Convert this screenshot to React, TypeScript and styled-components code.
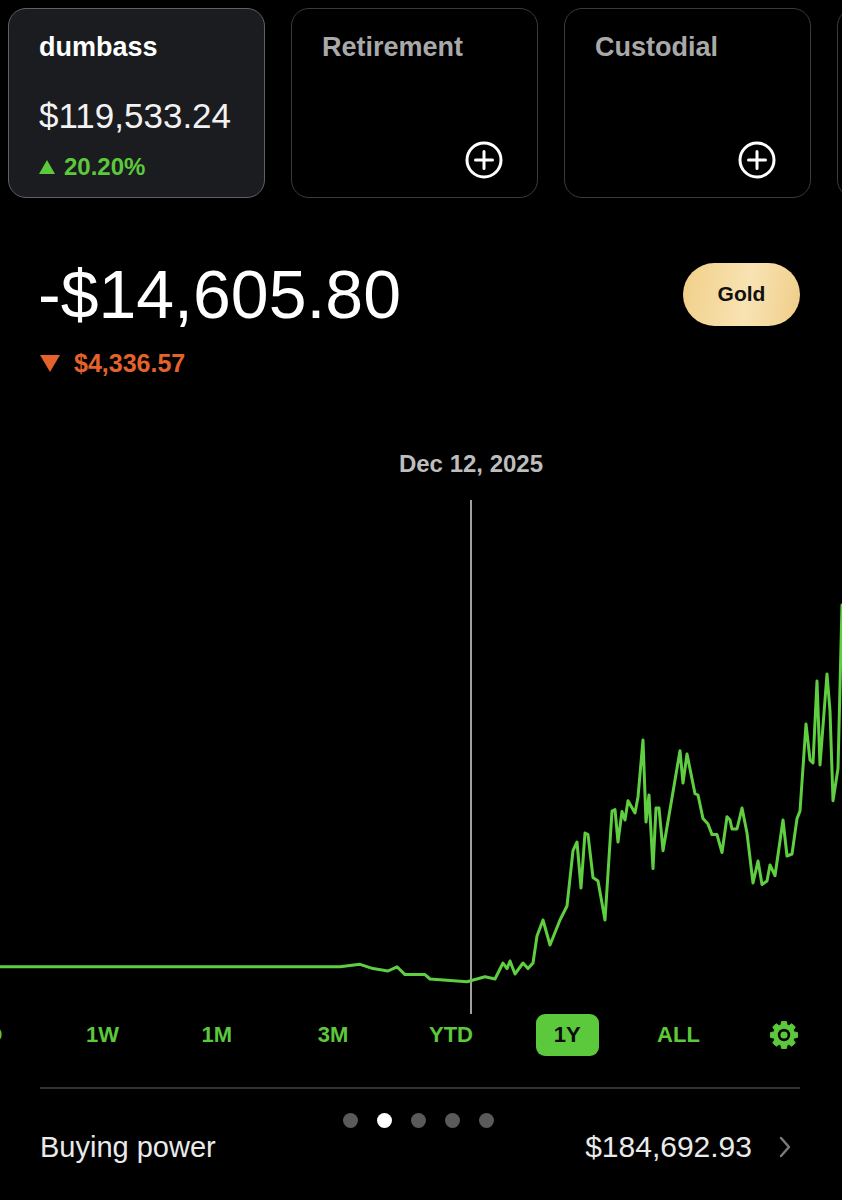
import React from "react";
import styled, { createGlobalStyle } from "styled-components";

const GREEN = "#5cc83c";
const ORANGE = "#e4622b";

const GlobalStyle = createGlobalStyle`
  html, body {
    margin: 0;
    padding: 0;
    background: #000;
  }
  body {
    font-family: "Liberation Sans", Arial, sans-serif;
    color: #fff;
    overflow-x: hidden;
  }
`;

const Page = styled.div`
  width: 842px;
  min-height: 1200px;
  background: #000;
  overflow: hidden;
`;

const CardRow = styled.div`
  display: flex;
  gap: 26px;
  padding: 8px 0 0 8px;
`;

const Card = styled.div<{ $active?: boolean; $w: number }>`
  flex: 0 0 ${(p) => p.$w}px;
  height: 190px;
  box-sizing: border-box;
  border-radius: 18px;
  border: 1.5px solid ${(p) => (p.$active ? "#606164" : "#3b3b3d")};
  background: ${(p) => (p.$active ? "#1b1c1f" : "#000")};
  padding: 22px 30px 18px 30px;
  display: flex;
  flex-direction: column;
`;

const CardTitle = styled.div<{ $active?: boolean }>`
  font-size: 27px;
  line-height: 32px;
  font-weight: 700;
  color: ${(p) => (p.$active ? "#fff" : "#a9a9a9")};
`;

const CardAmount = styled.div`
  margin-top: 33px;
  font-size: 35px;
  line-height: 40px;
  color: #f2f2f2;
`;

const CardChange = styled.div`
  margin-top: 16px;
  display: flex;
  align-items: center;
  gap: 9px;
  font-size: 24px;
  line-height: 30px;
  font-weight: 700;
  color: ${GREEN};
`;

const AddButton = styled.div`
  margin-top: auto;
  align-self: flex-end;
  margin-right: 4px;
  width: 38px;
  height: 38px;
`;

const Header = styled.div`
  margin-top: 62px;
  padding: 0 42px 0 38px;
  display: flex;
  align-items: center;
  justify-content: space-between;
`;

const Balance = styled.div`
  font-size: 68px;
  line-height: 68px;
  color: #fff;
`;

const GoldPill = styled.div`
  width: 117px;
  height: 63px;
  border-radius: 32px;
  display: flex;
  align-items: center;
  justify-content: center;
  background: linear-gradient(100deg, #f1cf88 0%, #f8e3b3 55%, #efcd88 100%);
  color: #111;
  font-size: 21px;
  font-weight: 700;
`;

const DayChange = styled.div`
  margin-top: 20px;
  padding-left: 40px;
  display: flex;
  align-items: center;
  gap: 14px;
  font-size: 25px;
  line-height: 30px;
  font-weight: 700;
  color: ${ORANGE};
`;

const DateLabel = styled.div`
  margin-top: 72px;
  text-align: center;
  padding-left: 100px;
  font-size: 24px;
  line-height: 28px;
  font-weight: 700;
  color: #bdbdbd;
`;

const Chart = styled.svg`
  display: block;
  margin-top: 14px;
  width: 842px;
  height: 522px;
`;

const RangeRow = styled.div`
  display: grid;
  grid-template-columns: 114.5px 114px 114.5px 118px 118px 114.5px 108px 103px;
  margin-left: -69px;
  height: 42px;
  align-items: center;
  justify-items: center;
`;

const RangeItem = styled.div<{ $active?: boolean }>`
  height: 42px;
  padding: 0 18px;
  border-radius: 9px;
  display: flex;
  align-items: center;
  font-size: 22px;
  font-weight: 700;
  background: ${(p) => (p.$active ? GREEN : "transparent")};
  color: ${(p) => (p.$active ? "#0b0b0b" : GREEN)};
`;

const Divider = styled.div`
  margin: 31px 42px 0 40px;
  height: 2px;
  background: #333336;
`;

const Dots = styled.div`
  margin-top: 24px;
  display: flex;
  justify-content: center;
  gap: 19px;
  padding-right: 6px;
`;

const Dot = styled.div<{ $on?: boolean }>`
  width: 15px;
  height: 15px;
  border-radius: 50%;
  background: ${(p) => (p.$on ? "#fff" : "#5a5a5c")};
`;

const PowerRow = styled.div`
  display: flex;
  align-items: center;
  justify-content: space-between;
  padding: 0 50px 0 40px;
  height: 38px;
  font-size: 29px;
  color: #eaeaea;
`;

const PowerValue = styled.div`
  display: flex;
  align-items: center;
  gap: 26px;
  font-size: 30px;
`;

const RAW: [number, number][] = [
  [0, 966.7], [340, 966.8], [360, 964.3], [373, 968.6], [388, 971], [397, 966.8],
  [405, 974.6], [425, 974.6], [430, 979], [467, 981.8], [485, 976.8], [495, 979],
  [503, 963], [507, 968.6], [510, 961], [515, 974], [523, 963], [528, 968.6],
  [533, 963], [537, 936], [543, 920], [550, 945], [560, 920], [567, 906],
  [573, 850.7], [577, 842], [581, 888], [585, 833], [588, 834.6], [593, 877.5],
  [598, 881], [605, 920], [612, 811], [615, 809.6], [618, 842], [622, 811.4],
  [625, 820], [628, 800.7], [635, 813], [638, 797], [643, 740], [646, 822],
  [649, 795], [653, 868.6], [656, 808], [659, 808], [663, 850.7], [680, 750.7],
  [683, 783], [687, 754], [695, 793.6], [698, 795], [703, 818.6], [708, 824],
  [712, 834.6], [717, 834.6], [722, 852.5], [727, 816.8], [730, 820], [732, 829],
  [737, 829], [742, 808], [747, 833], [753, 883], [758, 861], [762, 884.6],
  [767, 881], [770, 865], [775, 875.7], [783, 820], [787, 856], [792, 854],
  [797, 818.6], [800, 811], [806, 724], [810, 760], [813, 763], [817, 681],
  [820, 765], [827, 674], [830, 711], [833, 800.7], [838, 768.6], [842, 605],
];

const CHART_TOP = 492;
const linePoints = RAW.map(([x, y]) => `${x},${(y - CHART_TOP).toFixed(1)}`).join(" ");

function PlusCircle() {
  return (
    <svg width="38" height="38" viewBox="0 0 38 38">
      <circle cx="19" cy="19" r="17" fill="none" stroke="#fff" strokeWidth="3" />
      <path d="M19 10.5v17M10.5 19h17" stroke="#fff" strokeWidth="3" strokeLinecap="round" />
    </svg>
  );
}

function Cog() {
  const pts: string[] = [];
  const d = (deg: number) => (deg * Math.PI) / 180;
  const add = (ang: number, r: number) =>
    pts.push(`${(14 + r * Math.cos(ang)).toFixed(2)},${(14 + r * Math.sin(ang)).toFixed(2)}`);
  for (let i = 0; i < 8; i++) {
    const a = d(i * 45);
    add(a - d(17), 10.5);
    add(a - d(10), 13.8);
    add(a + d(10), 13.8);
    add(a + d(17), 10.5);
  }
  return (
    <svg width="28" height="28" viewBox="0 0 28 28">
      <polygon points={pts.join(" ")} fill={GREEN} strokeLinejoin="round" stroke={GREEN} strokeWidth="1" />
      <circle cx="14" cy="14" r="6.2" fill="#000" />
      <circle cx="14" cy="14" r="3.6" fill={GREEN} />
    </svg>
  );
}

function Chevron() {
  return (
    <svg width="14" height="24" viewBox="0 0 14 24">
      <path d="M3 3l8 9-8 9" fill="none" stroke="#7a7a7a" strokeWidth="2.5" strokeLinecap="round" strokeLinejoin="round" />
    </svg>
  );
}

const ranges = ["1D", "1W", "1M", "3M", "YTD", "1Y", "ALL"];

export default function App() {
  return (
    <Page>
      <GlobalStyle />
      <CardRow>
        <Card $active $w={257}>
          <CardTitle $active>dumbass</CardTitle>
          <CardAmount>$119,533.24</CardAmount>
          <CardChange>
            <svg width="16" height="14" viewBox="0 0 16 14">
              <path d="M8 0L16 14H0z" fill={GREEN} />
            </svg>
            20.20%
          </CardChange>
        </Card>
        <Card $w={247}>
          <CardTitle>Retirement</CardTitle>
          <AddButton>
            <PlusCircle />
          </AddButton>
        </Card>
        <Card $w={247}>
          <CardTitle>Custodial</CardTitle>
          <AddButton>
            <PlusCircle />
          </AddButton>
        </Card>
        <Card $w={247} />
      </CardRow>

      <Header>
        <Balance>-$14,605.80</Balance>
        <GoldPill>Gold</GoldPill>
      </Header>

      <DayChange>
        <svg width="20" height="17" viewBox="0 0 20 17">
          <path d="M0 0H20L10 17z" fill={ORANGE} />
        </svg>
        $4,336.57
      </DayChange>

      <DateLabel>Dec 12, 2025</DateLabel>

      <Chart viewBox="0 0 842 522">
        <line x1="471" y1="8" x2="471" y2="522" stroke="#a0a0a0" strokeWidth="2" />
        <polyline
          points={linePoints}
          fill="none"
          stroke="#5fcf41"
          strokeWidth="3"
          strokeLinejoin="round"
          strokeLinecap="round"
        />
      </Chart>

      <RangeRow>
        {ranges.map((r) => (
          <RangeItem key={r} $active={r === "1Y"}>
            {r}
          </RangeItem>
        ))}
        <Cog />
      </RangeRow>

      <Divider />

      <Dots>
        <Dot />
        <Dot $on />
        <Dot />
        <Dot />
        <Dot />
      </Dots>

      <PowerRow>
        <span>Buying power</span>
        <PowerValue>
          $184,692.93
          <Chevron />
        </PowerValue>
      </PowerRow>
    </Page>
  );
}
